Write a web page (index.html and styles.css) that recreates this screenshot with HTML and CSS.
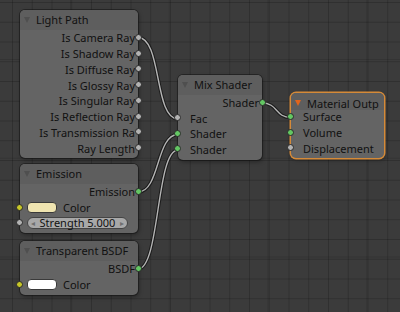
FILE: index.html
```html
<!DOCTYPE html>
<html lang="en">
<head>
  <meta charset="UTF-8">
  <title>Node Editor</title>
  <link rel="stylesheet" href="styles.css">
</head>
<body>
  <div class="editor">
    <svg class="wires" width="400" height="312" viewBox="0 0 400 312">
      <g class="wire-edge">
        <path d="M138 37.5 C162 37.5, 154 119, 178 119"/>
        <path d="M138 192 C160 192, 156 134.5, 178 134.5"/>
        <path d="M138 269 C160 269, 156 150, 178 150"/>
        <path d="M262 103 C278 103, 275 117.5, 291 117.5"/>
      </g>
      <g class="wire-core">
        <path d="M138 37.5 C162 37.5, 154 119, 178 119"/>
        <path d="M138 192 C160 192, 156 134.5, 178 134.5"/>
        <path d="M138 269 C160 269, 156 150, 178 150"/>
        <path d="M262 103 C278 103, 275 117.5, 291 117.5"/>
      </g>
    </svg>

    <!-- Light Path -->
    <div class="node node-light">
      <div class="node-head"><span class="arrow"></span>Light Path</div>
      <div class="node-body">
        <div class="row out">Is Camera Ray<i class="sock grey"></i></div>
        <div class="row out">Is Shadow Ray<i class="sock grey"></i></div>
        <div class="row out">Is Diffuse Ray<i class="sock grey"></i></div>
        <div class="row out">Is Glossy Ray<i class="sock grey"></i></div>
        <div class="row out">Is Singular Ray<i class="sock grey"></i></div>
        <div class="row out">Is Reflection Ray<i class="sock grey"></i></div>
        <div class="row out">Is Transmission Ra<i class="sock grey"></i></div>
        <div class="row out">Ray Length<i class="sock grey"></i></div>
      </div>
    </div>

    <!-- Emission -->
    <div class="node node-emission">
      <div class="node-head"><span class="arrow"></span>Emission</div>
      <div class="node-body">
        <div class="row out">Emission<i class="sock green"></i></div>
        <div class="row in"><i class="sock yellow"></i><span class="swatch cream"></span>Color</div>
        <div class="row in"><i class="sock grey"></i>
          <div class="num-field"><span class="step">&#9666;</span>Strength 5.000<span class="step">&#9656;</span></div>
        </div>
      </div>
    </div>

    <!-- Transparent BSDF -->
    <div class="node node-transparent">
      <div class="node-head"><span class="arrow"></span>Transparent BSDF</div>
      <div class="node-body">
        <div class="row out">BSDF<i class="sock green"></i></div>
        <div class="row in"><i class="sock yellow"></i><span class="swatch white"></span>Color</div>
      </div>
    </div>

    <!-- Mix Shader -->
    <div class="node node-mix">
      <div class="node-head"><span class="arrow"></span>Mix Shader</div>
      <div class="node-body">
        <div class="row out">Shader<i class="sock green"></i></div>
        <div class="row in label-in"><i class="sock grey"></i>Fac</div>
        <div class="row in label-in"><i class="sock green"></i>Shader</div>
        <div class="row in label-in"><i class="sock green"></i>Shader</div>
      </div>
    </div>

    <!-- Material Output -->
    <div class="node node-output active">
      <div class="node-head"><span class="arrow orange"></span>Material Outp</div>
      <div class="node-body">
        <div class="row in label-in"><i class="sock green"></i>Surface</div>
        <div class="row in label-in"><i class="sock green"></i>Volume</div>
        <div class="row in label-in"><i class="sock grey"></i>Displacement</div>
      </div>
    </div>
  </div>
</body>
</html>
```

FILE: styles.css
```css
body {
  margin: 0;
  padding: 0;
  background-color: #3a3a3a;
  font-family: "Noto Sans", "DejaVu Sans", sans-serif;
  font-size: 11px;
  color: #111;
}
.editor {
  position: relative;
  width: 400px;
  height: 312px;
  overflow: hidden;
  background-color: #3b3b3b;
  background-image:
    linear-gradient(to right, rgba(0, 0, 0, 0.12) 1px, transparent 1px),
    linear-gradient(to bottom, rgba(0, 0, 0, 0.12) 1px, transparent 1px),
    linear-gradient(to right, rgba(0, 0, 0, 0.18) 1px, transparent 1px),
    linear-gradient(to bottom, rgba(0, 0, 0, 0.18) 1px, transparent 1px);
  background-size: 98.75px 98.75px, 98.75px 98.75px, 19.75px 19.75px, 19.75px 19.75px;
  background-position: 70px 59px, 70px 59px, 12px 2px, 12px 2px;
}

/* wires sit under the nodes */
.wires {
  position: absolute;
  left: 0;
  top: 0;
}
.wires path {
  fill: none;
  stroke-linecap: round;
}
.wire-edge path {
  stroke: #1c1c1c;
  stroke-width: 3.5;
}
.wire-core path {
  stroke: #b4b4b4;
  stroke-width: 1.4;
}

/* nodes */
.node {
  position: absolute;
  background-color: #646464;
  border-radius: 5px;
  box-shadow: 0 0 0 1px rgba(20, 20, 20, 0.55), 1px 2px 4px rgba(0, 0, 0, 0.35);
  padding-bottom: 2px;
}
.node.active {
  box-shadow: 0 0 0 1.5px #d58a38, 1px 2px 4px rgba(0, 0, 0, 0.35);
}
.node-head {
  display: flex;
  align-items: center;
  height: 20px;
  line-height: 19px;
  padding-left: 4px;
  padding-bottom: 1px;
  box-sizing: border-box;
  background-color: #5e5e5e;
  border-radius: 5px 5px 0 0;
  white-space: nowrap;
  overflow: hidden;
}
.arrow {
  width: 0;
  height: 0;
  margin-right: 6px;
  border-left: 3.5px solid transparent;
  border-right: 3.5px solid transparent;
  border-top: 6px solid #4f4f4f;
}
.arrow.orange {
  border-top-color: #e0641c;
}

.node-light { left: 20px; top: 10px; width: 118px; }
.node-emission { left: 20px; top: 164px; width: 118px; }
.node-transparent { left: 20px; top: 241px; width: 118px; }
.node-mix { left: 178px; top: 75px; width: 84px; padding-bottom: 3px; }
.node-output { left: 291px; top: 93px; width: 93px; }
.node-output .node-head { height: 17px; padding-bottom: 0; padding-top: 3px; }
.node-output .node-body { margin-top: -1px; }

.row {
  position: relative;
  display: flex;
  align-items: center;
  height: 15.75px;
  white-space: nowrap;
}
.node-mix .row { height: 15.5px; }
.row.out {
  justify-content: flex-end;
  padding-right: 3px;
  overflow: visible;
}
.row.in {
  padding-left: 7px;
}
.row.label-in {
  padding-left: 12px;
}

/* sockets */
.sock {
  position: absolute;
  top: 50%;
  width: 7px;
  height: 7px;
  margin-top: -4px;
  border-radius: 50%;
  box-sizing: border-box;
  border: 1px solid #2a2a2a;
}
.out .sock { right: -4px; }
.in .sock { left: -4px; }
.sock.grey { background-color: #b2b2b2; }
.sock.green { background-color: #63c763; }
.sock.yellow { background-color: #c7c729; }

/* colour swatch */
.swatch {
  width: 30px;
  height: 11px;
  margin-right: 6px;
  border-radius: 4px;
  box-sizing: border-box;
  border: 1px solid #3a3a3a;
}
.swatch.cream { background-color: #efe4b0; }
.swatch.white { background-color: #ffffff; }

/* number field */
.num-field {
  display: flex;
  align-items: center;
  justify-content: space-between;
  width: 101px;
  height: 12px;
  line-height: 12px;
  padding: 0 3px;
  box-sizing: border-box;
  border-radius: 6px;
  background-color: #a8a8a8;
  border: 1px solid #444;
  font-size: 11px;
}
.step {
  color: #707070;
  font-size: 8px;
}
```
